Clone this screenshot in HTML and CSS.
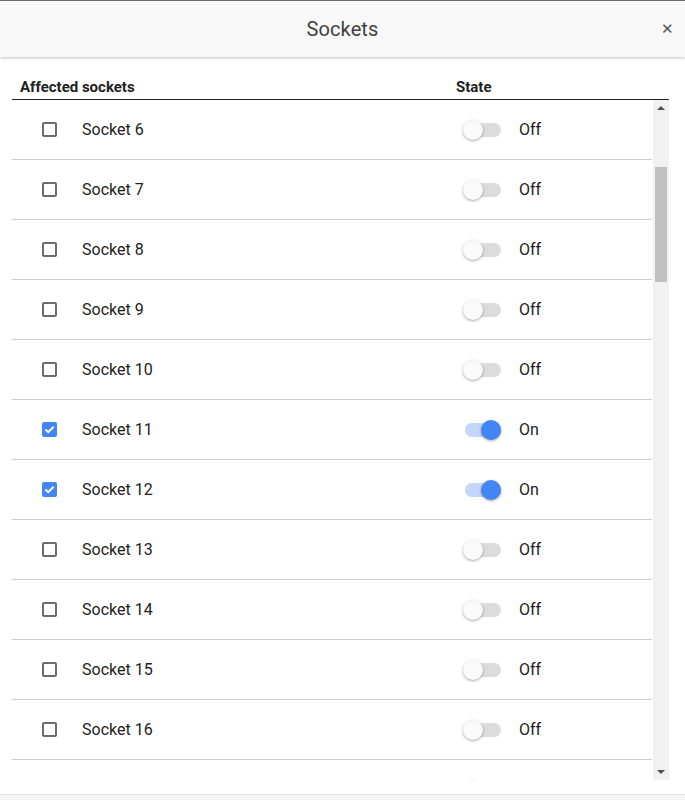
FILE: index.html
```html
<!DOCTYPE html>
<html>
<head>
<meta charset="utf-8">
<link rel="stylesheet" href="styles.css">
</head>
<body>
<div class="dialog">
  <div class="dlg-header">
    <h1 class="dlg-title">Sockets</h1>
    <span class="dlg-close">&#x2715;</span>
  </div>
  <div class="dlg-body">
    <div class="cols">
      <div class="col-name">Affected sockets</div>
      <div class="col-state">State</div>
    </div>
    <div class="scroller">
      <div class="list">
        <div class="row"><span class="cb"></span><span class="name">Socket 6</span><span class="toggle"><span class="track"></span><span class="knob"></span></span><span class="state">Off</span></div>
        <div class="row"><span class="cb"></span><span class="name">Socket 7</span><span class="toggle"><span class="track"></span><span class="knob"></span></span><span class="state">Off</span></div>
        <div class="row"><span class="cb"></span><span class="name">Socket 8</span><span class="toggle"><span class="track"></span><span class="knob"></span></span><span class="state">Off</span></div>
        <div class="row"><span class="cb"></span><span class="name">Socket 9</span><span class="toggle"><span class="track"></span><span class="knob"></span></span><span class="state">Off</span></div>
        <div class="row"><span class="cb"></span><span class="name">Socket 10</span><span class="toggle"><span class="track"></span><span class="knob"></span></span><span class="state">Off</span></div>
        <div class="row"><span class="cb checked"><svg viewBox="0 0 15 15"><path d="M3.4 7.6 L6.2 10.2 L11.6 4.8" fill="none" stroke="#fff" stroke-width="2"/></svg></span><span class="name">Socket 11</span><span class="toggle on"><span class="track"></span><span class="knob"></span></span><span class="state">On</span></div>
        <div class="row"><span class="cb checked"><svg viewBox="0 0 15 15"><path d="M3.4 7.6 L6.2 10.2 L11.6 4.8" fill="none" stroke="#fff" stroke-width="2"/></svg></span><span class="name">Socket 12</span><span class="toggle on"><span class="track"></span><span class="knob"></span></span><span class="state">On</span></div>
        <div class="row"><span class="cb"></span><span class="name">Socket 13</span><span class="toggle"><span class="track"></span><span class="knob"></span></span><span class="state">Off</span></div>
        <div class="row"><span class="cb"></span><span class="name">Socket 14</span><span class="toggle"><span class="track"></span><span class="knob"></span></span><span class="state">Off</span></div>
        <div class="row"><span class="cb"></span><span class="name">Socket 15</span><span class="toggle"><span class="track"></span><span class="knob"></span></span><span class="state">Off</span></div>
        <div class="row"><span class="cb"></span><span class="name">Socket 16</span><span class="toggle"><span class="track"></span><span class="knob"></span></span><span class="state">Off</span></div>
        <div class="row"><span class="cb ghost"></span><span class="name"></span><span class="toggle"><span class="track"></span><span class="knob"></span></span></div>
      </div>
      <div class="sbar">
        <span class="arrow up"></span>
        <div class="sbar-track"><div class="thumb"></div></div>
        <span class="arrow down"></span>
      </div>
    </div>
  </div>
  <div class="dlg-footer"></div>
</div>
</body>
</html>
```

FILE: styles.css
```css
html, body {
  margin: 0;
  padding: 0;
  background: #ffffff;
}
body {
  font-family: Roboto, "Liberation Sans", Arial, sans-serif;
  color: #212121;
}
.dialog {
  width: 685px;
  height: 800px;
  display: flex;
  flex-direction: column;
  overflow: hidden;
}
.dlg-header {
  height: 57px;
  box-sizing: border-box;
  border-top: 1px solid #6a6a6a;
  background: #f8f8f8;
  box-shadow: 0 1px 3px rgba(0, 0, 0, 0.25);
  display: flex;
  align-items: center;
  justify-content: center;
  position: relative;
  z-index: 2;
  flex: none;
}
.dlg-title {
  margin: 0;
  font-size: 20px;
  font-weight: 400;
  color: #424242;
  letter-spacing: 0.1px;
}
.dlg-close {
  position: absolute;
  right: 11px;
  top: 18px;
  font-size: 15px;
  color: #555;
  line-height: 20px;
}
.dlg-body {
  padding: 0 16px 0 12px;
  flex: none;
}
.cols {
  display: flex;
  height: 43px;
  box-sizing: border-box;
  padding-top: 21px;
  border-bottom: 1px solid #222;
  font-size: 15px;
  font-weight: 700;
  line-height: 18px;
  color: #212121;
}
.col-name {
  padding-left: 8px;
  width: 436px;
}
.scroller {
  display: flex;
  height: 680px;
}
.list {
  flex: 1;
  overflow: hidden;
}
.row {
  height: 60px;
  box-sizing: border-box;
  border-bottom: 1px solid #cfcfcf;
  display: flex;
  align-items: center;
  padding-left: 30px;
  font-size: 16px;
  color: #212121;
}
.cb {
  width: 15px;
  height: 15px;
  box-sizing: border-box;
  border: 2px solid #6b6b6b;
  border-radius: 2px;
  flex: none;
  position: relative;
}
.cb.ghost {
  visibility: hidden;
}
.cb.checked {
  background: #4285f4;
  border-color: #4285f4;
}
.cb svg {
  position: absolute;
  left: -2px;
  top: -2px;
  width: 15px;
  height: 15px;
}
.name {
  margin-left: 25px;
  width: 381px;
}
.toggle {
  position: relative;
  width: 40px;
  height: 20px;
  flex: none;
  display: flex;
  align-items: center;
}
.track {
  margin-left: 2px;
  width: 36px;
  height: 14px;
  border-radius: 7px;
  background: #dcdcdc;
}
.knob {
  position: absolute;
  left: 0;
  top: 0;
  width: 20px;
  height: 20px;
  border-radius: 50%;
  background: #fafafa;
  box-shadow: 0 1px 3px rgba(0, 0, 0, 0.35);
}
.toggle.on .track {
  background: #c3d7fb;
}
.toggle.on .knob {
  left: 18px;
  background: #4285f4;
}
.state {
  margin-left: 16px;
}
.sbar {
  width: 16px;
  margin-left: 1px;
  background: #f1f1f1;
  display: flex;
  flex-direction: column;
  align-items: center;
}
.arrow {
  width: 0;
  height: 0;
  border-left: 4px solid transparent;
  border-right: 4px solid transparent;
  flex: none;
}
.arrow.up {
  margin-top: 6px;
  border-bottom: 4px solid #505050;
}
.arrow.down {
  margin-bottom: 6px;
  border-top: 4px solid #505050;
}
.sbar-track {
  flex: 1;
  width: 100%;
  display: flex;
  justify-content: center;
}
.thumb {
  width: 12px;
  height: 115px;
  margin-top: 57px;
  background: #c1c1c1;
}
.dlg-footer {
  margin-top: 14px;
  flex: 1;
  border-top: 1px solid #e4e4e4;
  background: #f5f5f5;
}
```
